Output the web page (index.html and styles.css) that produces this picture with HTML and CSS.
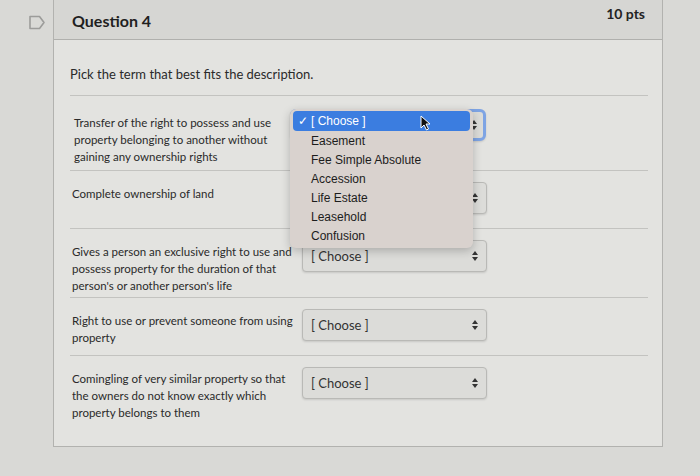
FILE: index.html
```html
<!DOCTYPE html>
<html lang="en">
  <head>
    <meta charset="UTF-8" />
    <meta name="viewport" content="width=device-width, initial-scale=1.0" />
    <title>Question 4</title>
    <link rel="stylesheet" href="styles.css">
  </head>
  <body>
    <main class="page">
      <div class="flag-col">
        <svg class="flag" viewBox="0 0 18 15" width="18" height="15">
          <path d="M2 1.5 H11.5 L16 7.5 L11.5 13.5 H2 Z" />
        </svg>
      </div>
      <section class="question">
        <header class="question-header">
          <h2 class="question-title">Question 4</h2>
          <span class="points">10 pts</span>
        </header>
        <div class="question-body">
          <p class="prompt">Pick the term that best fits the description.</p>

          <div class="match-row first">
            <div class="match-text">Transfer of the right to possess and use property belonging to another without gaining any ownership rights</div>
            <div class="select is-open">
              <span class="select-value">[ Choose ]</span>
              <svg class="arrows" viewBox="0 0 6 10" width="6" height="10"><path d="M3 0 L6 4 H0 Z M0 6 H6 L3 10 Z" /></svg>
              <ul class="menu">
                <li class="menu-item selected"><span class="check">✓</span>[ Choose ]
                  <svg class="cursor" viewBox="0 0 11 16" width="11" height="16"><path d="M1 1 V13 L4 10 L6.5 15 L8.5 14 L6 9 H10 Z" /></svg>
                </li>
                <li class="menu-item">Easement</li>
                <li class="menu-item">Fee Simple Absolute</li>
                <li class="menu-item">Accession</li>
                <li class="menu-item">Life Estate</li>
                <li class="menu-item">Leasehold</li>
                <li class="menu-item">Confusion</li>
              </ul>
            </div>
          </div>

          <div class="match-row">
            <div class="match-text">Complete ownership of land</div>
            <div class="select">
              <span class="select-value">[ Choose ]</span>
              <svg class="arrows" viewBox="0 0 6 10" width="6" height="10"><path d="M3 0 L6 4 H0 Z M0 6 H6 L3 10 Z" /></svg>
            </div>
          </div>

          <div class="match-row">
            <div class="match-text">Gives a person an exclusive right to use and possess property for the duration of that person's or another person's life</div>
            <div class="select">
              <span class="select-value">[ Choose ]</span>
              <svg class="arrows" viewBox="0 0 6 10" width="6" height="10"><path d="M3 0 L6 4 H0 Z M0 6 H6 L3 10 Z" /></svg>
            </div>
          </div>

          <div class="match-row">
            <div class="match-text">Right to use or prevent someone from using property</div>
            <div class="select">
              <span class="select-value">[ Choose ]</span>
              <svg class="arrows" viewBox="0 0 6 10" width="6" height="10"><path d="M3 0 L6 4 H0 Z M0 6 H6 L3 10 Z" /></svg>
            </div>
          </div>

          <div class="match-row last">
            <div class="match-text">Comingling of very similar property so that the owners do not know exactly which property belongs to them</div>
            <div class="select">
              <span class="select-value">[ Choose ]</span>
              <svg class="arrows" viewBox="0 0 6 10" width="6" height="10"><path d="M3 0 L6 4 H0 Z M0 6 H6 L3 10 Z" /></svg>
            </div>
          </div>
        </div>
      </section>
    </main>
  </body>
</html>
```

FILE: styles.css
```css
body {
  margin: 0;
  background-color: #d9d9d6;
  font-family: Lato, "Noto Sans", sans-serif;
  color: #2a2a2a;
}
.page {
  display: flex;
  height: 476px;
}
.flag-col {
  width: 53px;
  display: flex;
  justify-content: flex-end;
  align-items: flex-start;
  padding: 15px 7px 0 0;
  box-sizing: border-box;
}
.flag path {
  fill: none;
  stroke: #9c9c9a;
  stroke-width: 1.6;
  stroke-linejoin: round;
}
.question {
  width: 610px;
  height: 447px;
  box-sizing: border-box;
  border: 1px solid #b2b2af;
  border-top: none;
  background-color: #e3e3e0;
  display: flex;
  flex-direction: column;
}
.question-header {
  height: 40px;
  box-sizing: border-box;
  border-bottom: 1px solid #b0b0ad;
  background-color: #d6d6d3;
  display: flex;
  justify-content: space-between;
  padding: 0 17px 0 18px;
}
.question-title {
  margin: 0;
  align-self: center;
  font-size: 16px;
  font-weight: 700;
  color: #1f1f1f;
  padding-top: 2px;
}
.points {
  padding-top: 5px;
  font-size: 14px;
  font-weight: 700;
  color: #232323;
}
.question-body {
  flex: 1;
  display: flex;
  flex-direction: column;
  padding: 0 14px 0 16px;
}
.prompt {
  margin: 0;
  padding: 25px 0 12px;
  line-height: 18px;
  font-size: 13px;
  border-bottom: 1px solid #c3c3c0;
}
.match-row {
  display: grid;
  grid-template-columns: 230px 185px;
  align-items: start;
  padding: 11px 0 3px 2px;
  border-bottom: 1px solid #c3c3c0;
}
.match-row.first {
  padding: 13px 0 5px 4px;
  grid-template-columns: 216px 196px;
}
.match-row.last {
  flex: 1;
  border-bottom: none;
}
.match-text {
  padding-top: 3px;
  font-size: 11.5px;
  line-height: 17px;
}
.first .match-text {
  padding-top: 5px;
}
.select {
  position: relative;
  height: 32px;
  margin-bottom: 11px;
  box-sizing: border-box;
  border: 1px solid #b9b9b6;
  border-radius: 4px;
  background-color: #dcdcd9;
  box-shadow: 0 1px 2px rgba(0, 0, 0, 0.12);
  display: flex;
  align-items: center;
  justify-content: space-between;
  padding: 0 8px 0 8px;
  font-size: 13px;
  color: #333;
}
.select.is-open {
  border: 3px solid #7ea4e4;
  border-radius: 6px;
  padding-right: 6px;
}
/* value sits under the open menu */
.is-open .select-value {
  visibility: hidden;
}
.arrows path {
  fill: #333;
}
.menu {
  position: absolute;
  top: -3px;
  left: -3px;
  width: 183px;
  margin: 0;
  padding: 2px 3px 2px;
  list-style: none;
  background-color: #d9d2ce;
  border-radius: 6px;
  box-shadow: 0 3px 10px rgba(0, 0, 0, 0.22);
  box-sizing: border-box;
  font-family: "Liberation Sans", Arial, sans-serif;
  font-size: 12px;
  color: #1c1c1c;
  z-index: 2;
}
.menu-item {
  position: relative;
  height: 19px;
  line-height: 19px;
  padding-left: 18px;
}
.menu-item.selected {
  background-color: #3b7de0;
  color: #fff;
  border-radius: 4px;
  height: 20px;
  line-height: 20px;
  margin-bottom: 1px;
}
.check {
  position: absolute;
  left: 5px;
}
.cursor {
  position: absolute;
  left: 127px;
  top: 4px;
}
.cursor path {
  fill: #111;
  stroke: #fff;
  stroke-width: 1;
}
```
